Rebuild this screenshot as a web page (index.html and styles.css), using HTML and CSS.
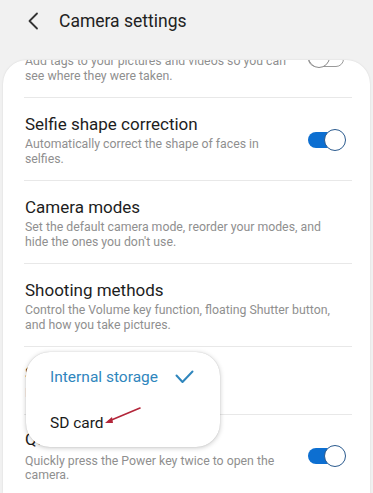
FILE: index.html
```html
<!DOCTYPE html>
<html>
<head>
<meta charset="utf-8">
<link rel="stylesheet" href="styles.css">
</head>
<body>
<div class="screen">
  <header class="topbar">
    <svg class="back" width="12" height="18" viewBox="0 0 12 18"><path d="M10 1.5 L2.5 9 L10 16.5" fill="none" stroke="#333" stroke-width="1.8" stroke-linecap="round" stroke-linejoin="round"/></svg>
    <h1 class="title">Camera settings</h1>
  </header>
  <main class="card">
    <div class="list">
      <div class="item first">
        <div class="text">
          <div class="name">Location tags</div>
          <div class="desc">Add tags to your pictures and videos so you can see where they were taken.</div>
        </div>
        <span class="toggle off"><span class="thumb"></span></span>
      </div>
      <div class="item">
        <div class="text">
          <div class="name">Selfie shape correction</div>
          <div class="desc">Automatically correct the shape of faces in selfies.</div>
        </div>
        <span class="toggle on"><span class="thumb"></span></span>
      </div>
      <div class="item">
        <div class="text">
          <div class="name">Camera modes</div>
          <div class="desc">Set the default camera mode, reorder your modes, and hide the ones you don't use.</div>
        </div>
      </div>
      <div class="item">
        <div class="text">
          <div class="name">Shooting methods</div>
          <div class="desc">Control the Volume key function, floating Shutter button, and how you take pictures.</div>
        </div>
      </div>
      <div class="item storage">
        <div class="text">
          <div class="name">Storage location</div>
          <div class="desc blue">Internal storage</div>
        </div>
      </div>
      <div class="item last">
        <div class="text">
          <div class="name">Quick launch</div>
          <div class="desc">Quickly press the Power key twice to open the camera.</div>
        </div>
        <span class="toggle on"><span class="thumb"></span></span>
      </div>
    </div>
    <div class="popup">
      <div class="opt selected">
        <span>Internal storage</span>
        <svg width="19" height="14" viewBox="0 0 19 14"><path d="M1.5 5.5 L7.5 12 L17.5 1.5" fill="none" stroke="#2f86bd" stroke-width="2" stroke-linecap="round" stroke-linejoin="round"/></svg>
      </div>
      <div class="opt">
        <span>SD card</span>
      </div>
      <svg class="arrow" width="40" height="20" viewBox="0 0 40 20"><path d="M37 2 L6 15" stroke="#b3263a" stroke-width="1.6" stroke-linecap="round"/><path d="M2 17 L9 11 L10 17 Z" fill="#b3263a"/></svg>
    </div>
  </main>
</div>
</body>
</html>
```

FILE: styles.css
```css
* { box-sizing: border-box; }
html, body {
  margin: 0;
  padding: 0;
  background: #f1f1f1;
  font-family: Roboto, "Noto Sans", "Liberation Sans", sans-serif;
}
.screen {
  width: 373px;
  height: 493px;
  overflow: hidden;
  display: flex;
  flex-direction: column;
}
.topbar {
  height: 41px;
  display: flex;
  align-items: center;
  padding-left: 27px;
  gap: 20px;
  flex: none;
}
.back { flex: none; }
.title {
  margin: 0;
  font-size: 17.5px;
  font-weight: 400;
  color: #222;
}
.card {
  position: relative;
  margin: 19px 3px 0 3px;
  flex: 1;
  background: #fff;
  border-radius: 24px 24px 0 0;
  overflow: hidden;
  box-shadow: 0 0 2px rgba(0,0,0,0.12);
}
.list {
  margin-top: -45px;
}
.item {
  display: flex;
  align-items: center;
  padding: 16px 6px 14px 1px;
  margin: 0 18px 0 21px;
  border-bottom: 1px solid #e8e8e8;
}
.item.storage { padding-bottom: 13px; }
.item.last { border-bottom: none; padding-top: 14px; }
.item.last .desc { margin-top: 5px; }
.text { flex: 1; min-width: 0; }
.name {
  font-size: 17px;
  line-height: 20px;
  color: #1d1d1d;
}
.desc {
  margin-top: 3px;
  font-size: 12.3px;
  line-height: 14.5px;
  color: #8f8f8f;
}
.desc.blue { color: #2f86bd; }
.toggle {
  position: relative;
  flex: none;
  width: 38px;
  height: 22px;
  margin-left: 12px;
}
.toggle::before {
  content: "";
  position: absolute;
  left: 0;
  right: 2px;
  top: 3px;
  height: 16px;
  border-radius: 8px;
}
.toggle .thumb {
  position: absolute;
  top: 0;
  width: 22px;
  height: 22px;
  border-radius: 50%;
  background: #fff;
}
.toggle.on::before { background: #0d6fd1; }
.toggle.on .thumb { right: 0; border: 1.5px solid #2a5a8e; }
.toggle.off::before { border: 1.5px solid #9a9a9a; background: #fff; }
.toggle.off .thumb { left: 0; border: 1.5px solid #8a8a8a; }
.popup {
  position: absolute;
  left: 23px;
  top: 292px;
  width: 194px;
  height: 95px;
  background: #fff;
  border-radius: 24px;
  box-shadow: 0 1px 5px rgba(0,0,0,0.22), 0 0 1px rgba(0,0,0,0.2);
  padding: 13px 26px 0 24px;
}
.opt {
  height: 23px;
  display: flex;
  align-items: center;
  justify-content: space-between;
  font-size: 15.5px;
  color: #1a1a1a;
}
.opt + .opt { margin-top: 23px; }
.opt.selected { color: #2f86bd; }
.arrow {
  position: absolute;
  left: 77px;
  top: 54px;
}
```
